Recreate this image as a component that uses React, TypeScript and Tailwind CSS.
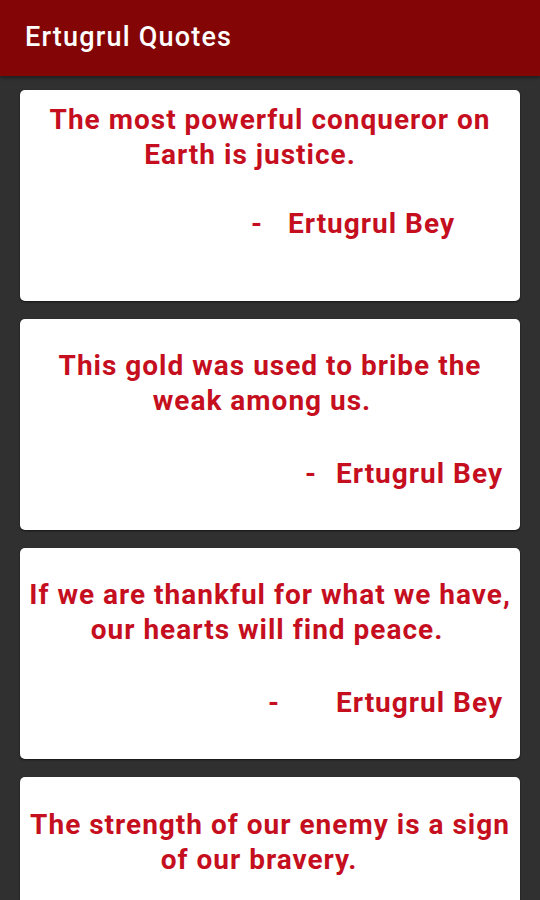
import React from "react";

type Quote = {
  lines: { text: string; pr: string }[];
  pt: string;
  gap: string;
  authorPr: string;
  dashGap: string;
  showAuthor: boolean;
};

const quotes: Quote[] = [
  {
    lines: [
      { text: "The most powerful conqueror on", pr: "pr-0" },
      { text: "Earth is justice.", pr: "pr-[40px]" },
    ],
    pt: "pt-[12px]",
    gap: "mt-[34px]",
    authorPr: "pr-[65px]",
    dashGap: "ml-[25px]",
    showAuthor: true,
  },
  {
    lines: [
      { text: "This gold was used to bribe the", pr: "pr-0" },
      { text: "weak among us.", pr: "pr-[16px]" },
    ],
    pt: "pt-[29px]",
    gap: "mt-[38px]",
    authorPr: "pr-[17px]",
    dashGap: "ml-[19px]",
    showAuthor: true,
  },
  {
    lines: [
      { text: "If we are thankful for what we have,", pr: "pr-0" },
      { text: "our hearts will find peace.", pr: "pr-[6px]" },
    ],
    pt: "pt-[29px]",
    gap: "mt-[38px]",
    authorPr: "pr-[17px]",
    dashGap: "ml-[56px]",
    showAuthor: true,
  },
  {
    lines: [
      { text: "The strength of our enemy is a sign", pr: "pr-0" },
      { text: "of our bravery.", pr: "pr-[22px]" },
    ],
    pt: "pt-[30px]",
    gap: "mt-[38px]",
    authorPr: "pr-[17px]",
    dashGap: "ml-[19px]",
    showAuthor: false,
  },
];

export default function App() {
  return (
    <div
      className="w-[540px] h-[900px] overflow-hidden bg-[#303030] flex flex-col"
      style={{ fontFamily: "Roboto, 'Noto Sans', Arial, sans-serif" }}
    >
      <div className="h-[76px] shrink-0 bg-[#840505] flex items-center px-[25px] shadow-[0_2px_3px_rgba(0,0,0,0.35)]">
        <span className="text-white text-[27px] tracking-[1.2px] font-medium leading-none pb-[2px]">
          Ertugrul Quotes
        </span>
      </div>
      <div className="flex flex-col gap-[18px] px-[20px] pt-[14px]">
        {quotes.map((q, i) => (
          <div
            key={i}
            className={`h-[211px] shrink-0 bg-white rounded-[5px] shadow-[0_1px_2px_rgba(0,0,0,0.6)] ${q.pt} text-[#c50f1f] font-bold text-[28px] tracking-[1px] leading-[35px]`}
          >
            {q.lines.map((l, j) => (
              <div key={j} className={`text-center whitespace-nowrap ${l.pr}`}>
                {l.text}
              </div>
            ))}
            {q.showAuthor && (
              <div className={`${q.gap} flex justify-end ${q.authorPr}`}>
                <span>-</span>
                <span className={q.dashGap}>Ertugrul Bey</span>
              </div>
            )}
          </div>
        ))}
      </div>
    </div>
  );
}
